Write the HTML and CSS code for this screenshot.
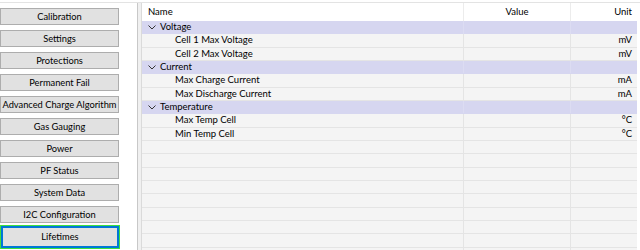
FILE: index.html
```html
<!DOCTYPE html>
<html lang="en">
<head>
    <meta charset="UTF-8">
    <meta name="viewport" content="width=device-width, initial-scale=1.0">
    <title>Data Memory - Lifetimes</title>
    <link rel="stylesheet" href="styles.css">
</head>
<body>
    <div class="window">
        <div class="nav">
            <button class="nav-button">Calibration</button>
            <button class="nav-button">Settings</button>
            <button class="nav-button">Protections</button>
            <button class="nav-button">Permanent Fail</button>
            <button class="nav-button">Advanced Charge Algorithm</button>
            <button class="nav-button">Gas Gauging</button>
            <button class="nav-button">Power</button>
            <button class="nav-button">PF Status</button>
            <button class="nav-button">System Data</button>
            <button class="nav-button">I2C Configuration</button>
            <button class="nav-button active">Lifetimes</button>
        </div>

        <div class="splitter"></div>

        <div class="grid">
            <div class="row header">
                <div class="cell name">Name</div>
                <div class="cell value">Value</div>
                <div class="cell unit">Unit</div>
            </div>

            <div class="row group">
                <div class="cell name"><svg class="chevron" width="8" height="5" viewBox="0 0 8 5"><path d="M0.5 0.5 L4 4 L7.5 0.5" fill="none" stroke="#333" stroke-width="1"/></svg>Voltage</div>
                <div class="cell value"></div>
                <div class="cell unit"></div>
            </div>
            <div class="row item">
                <div class="cell name">Cell 1 Max Voltage</div>
                <div class="cell value"></div>
                <div class="cell unit">mV</div>
            </div>
            <div class="row item">
                <div class="cell name">Cell 2 Max Voltage</div>
                <div class="cell value"></div>
                <div class="cell unit">mV</div>
            </div>

            <div class="row group">
                <div class="cell name"><svg class="chevron" width="8" height="5" viewBox="0 0 8 5"><path d="M0.5 0.5 L4 4 L7.5 0.5" fill="none" stroke="#333" stroke-width="1"/></svg>Current</div>
                <div class="cell value"></div>
                <div class="cell unit"></div>
            </div>
            <div class="row item">
                <div class="cell name">Max Charge Current</div>
                <div class="cell value"></div>
                <div class="cell unit">mA</div>
            </div>
            <div class="row item">
                <div class="cell name">Max Discharge Current</div>
                <div class="cell value"></div>
                <div class="cell unit">mA</div>
            </div>

            <div class="row group">
                <div class="cell name"><svg class="chevron" width="8" height="5" viewBox="0 0 8 5"><path d="M0.5 0.5 L4 4 L7.5 0.5" fill="none" stroke="#333" stroke-width="1"/></svg>Temperature</div>
                <div class="cell value"></div>
                <div class="cell unit"></div>
            </div>
            <div class="row item">
                <div class="cell name">Max Temp Cell</div>
                <div class="cell value"></div>
                <div class="cell unit">°C</div>
            </div>
            <div class="row item">
                <div class="cell name">Min Temp Cell</div>
                <div class="cell value"></div>
                <div class="cell unit">°C</div>
            </div>

            <div class="row item"><div class="cell name"></div><div class="cell value"></div><div class="cell unit"></div></div>
            <div class="row item"><div class="cell name"></div><div class="cell value"></div><div class="cell unit"></div></div>
            <div class="row item"><div class="cell name"></div><div class="cell value"></div><div class="cell unit"></div></div>
            <div class="row item"><div class="cell name"></div><div class="cell value"></div><div class="cell unit"></div></div>
            <div class="row item"><div class="cell name"></div><div class="cell value"></div><div class="cell unit"></div></div>
            <div class="row item"><div class="cell name"></div><div class="cell value"></div><div class="cell unit"></div></div>
            <div class="row item"><div class="cell name"></div><div class="cell value"></div><div class="cell unit"></div></div>
            <div class="row item"><div class="cell name"></div><div class="cell value"></div><div class="cell unit"></div></div>
            <div class="row item"><div class="cell name"></div><div class="cell value"></div><div class="cell unit"></div></div>
        </div>
    </div>
</body>
</html>
```

FILE: styles.css
```css
:root {
    --button-bg: #e1e1e1;
    --button-border: #adadad;
    --focus-blue: #0078d7;
    --focus-green: #3ee03e;
    --group-bg: #d6d6f0;
    --row-bg: #f4f4f4;
    --grid-line: #e4e4e4;
}

* {
    margin: 0;
    padding: 0;
    box-sizing: border-box;
}

body {
    background: #ffffff;
    font-family: 'Lato', 'Noto Sans', sans-serif;
    font-size: 9.5px;
    color: #000000;
    overflow: hidden;
}

.window {
    display: flex;
    height: 250px;
    margin-top: 2px;
    border-top: 1px solid #e3e3e3;
}

.nav {
    width: 137px;
    display: flex;
    flex-direction: column;
    gap: 5px;
    padding-top: 5px;
}

.nav-button {
    width: 119px;
    height: 17px;
    padding: 0;
    background: var(--button-bg);
    border: 1px solid var(--button-border);
    font-family: inherit;
    font-size: 9.3px;
    line-height: 14px;
    color: #000000;
    white-space: nowrap;
}

.nav-button.active {
    height: 22px;
    margin-top: -2px;
    margin-left: 1px;
    width: 118px;
    border: 2px solid var(--focus-blue);
    outline: 1px solid var(--focus-green);
}

.splitter {
    width: 5px;
    background: #f0f0f0;
    border-left: 1px solid #c8c8c8;
    border-right: 1px solid #dadada;
}

.grid {
    width: 495px;
    display: flex;
    flex-direction: column;
}

.row {
    display: grid;
    grid-template-columns: 321px 107px 1fr;
    flex: none;
    height: 13.333px;
    line-height: 12.5px;
    border-bottom: 1px solid var(--grid-line);
    background: var(--row-bg);
}

.row.header {
    height: 18px;
    line-height: 18px;
    background: #ffffff;
    border-bottom: none;
}

.row.group {
    background: var(--group-bg);
    border-bottom-color: var(--group-bg);
}

.cell {
    white-space: nowrap;
}

.cell.value,
.cell.unit {
    border-left: 1px solid var(--grid-line);
}

.row.group .cell.value,
.row.group .cell.unit {
    border-left-color: #dcdcf2;
}

.row.header .cell.value,
.row.header .cell.unit {
    border-left-color: #ececec;
}

.cell.name {
    padding-left: 33px;
}

.row.header .cell.name {
    padding-left: 6px;
}

.row.group .cell.name {
    padding-left: 6px;
    display: flex;
    align-items: center;
}

.chevron {
    margin-right: 4px;
}

.cell.value {
    text-align: center;
}

.cell.unit {
    text-align: right;
    padding-right: 5px;
}
```
